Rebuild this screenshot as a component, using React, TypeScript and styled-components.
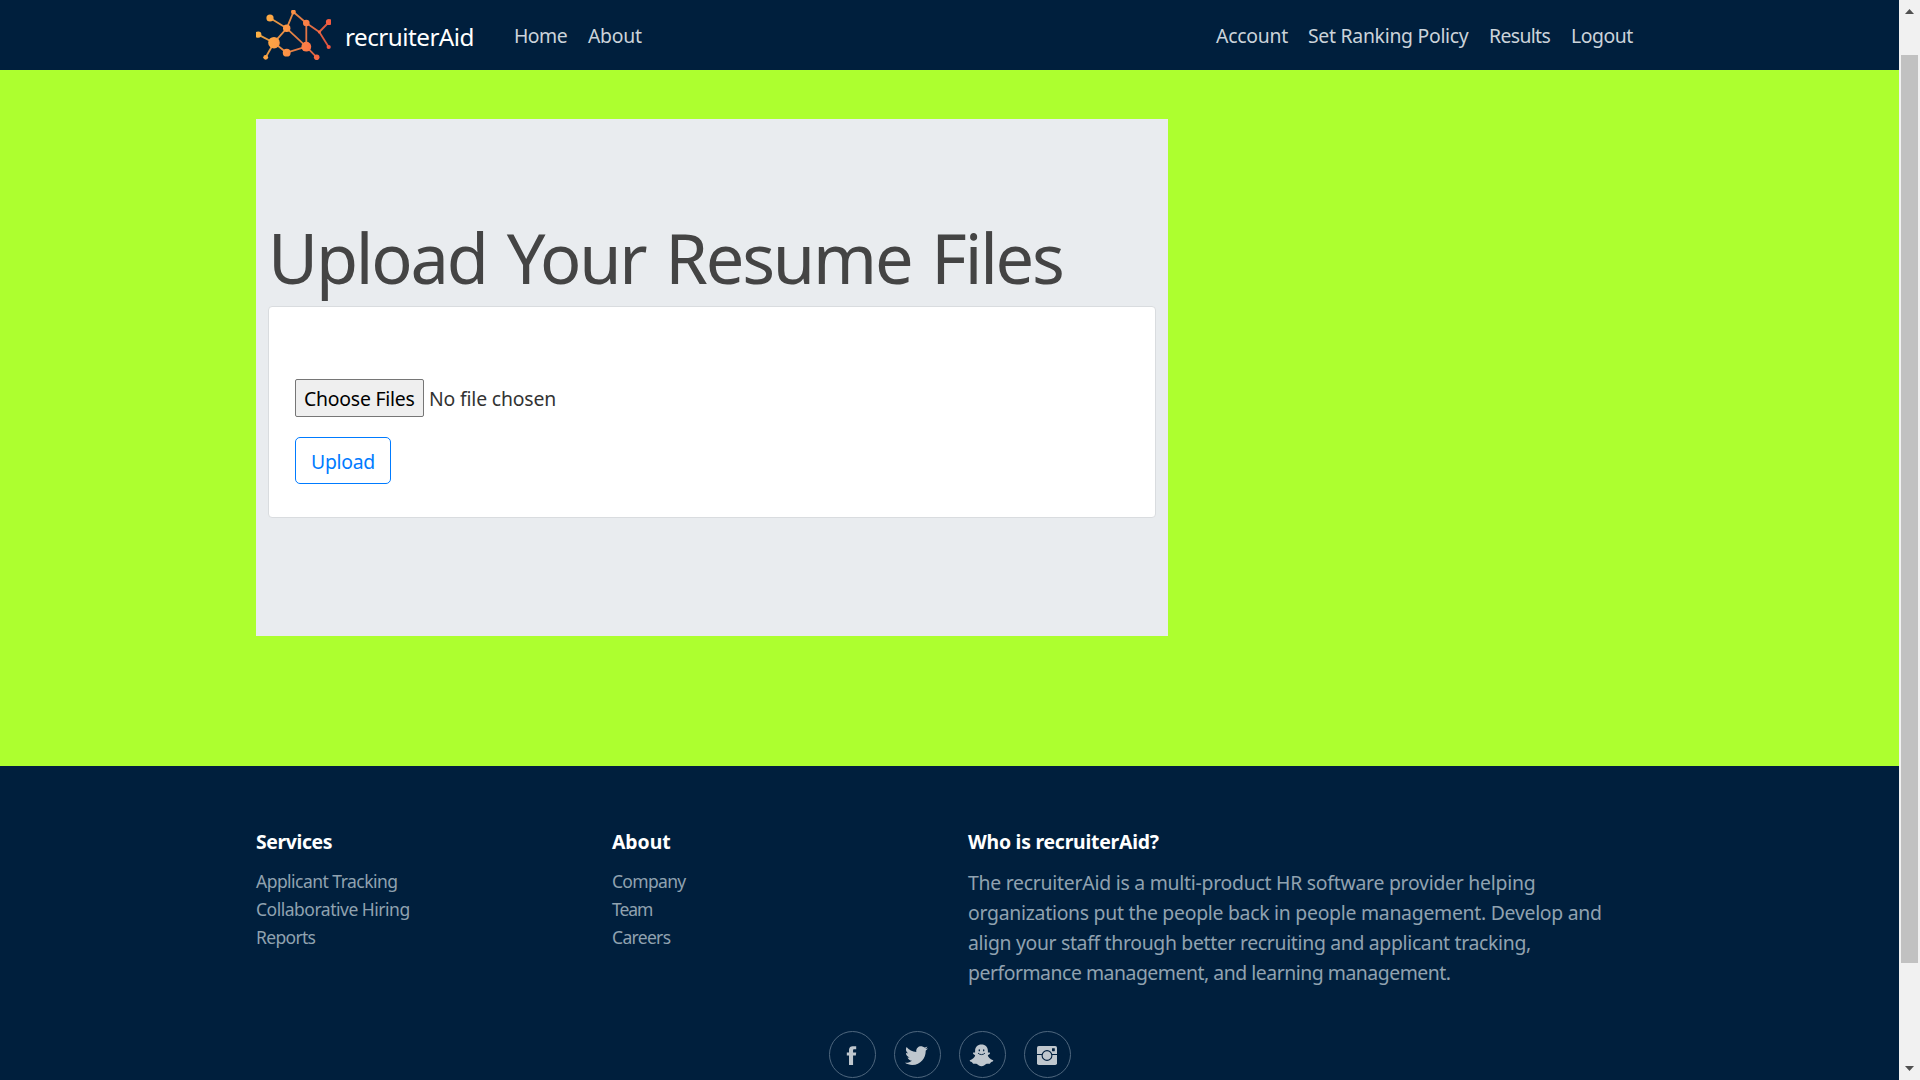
import React from "react";
import styled, { createGlobalStyle } from "styled-components";

const NAVY = "#001f3d";

const GlobalStyle = createGlobalStyle`
  *, *::before, *::after { box-sizing: border-box; }
  body {
    margin: 0;
    overflow: hidden;
    font-family: "Noto Sans", "Open Sans", sans-serif;
    font-size: 19.4px;
    line-height: 30px;
    color: #212529;
  }
  h1, h3, p, ul { margin: 0; padding: 0; font-weight: 400; }
  ul { list-style: none; }
  a { color: inherit; text-decoration: none; }
`;

const Window = styled.div`
  display: flex;
  width: 1920px;
  height: 1080px;
  overflow: hidden;
`;

const Page = styled.div`
  flex: 0 0 1899px;
  display: flex;
  flex-direction: column;
  height: 1080px;
  overflow: hidden;
  background: #adff2f;
`;

const Spaced = styled.span<{ $ls: number }>`
  letter-spacing: ${(p) => p.$ls}px;
  white-space: nowrap;
`;

const Header = styled.header`
  flex: 0 0 70px;
  display: flex;
  align-items: center;
  padding: 0 256px;
  background: ${NAVY};
`;

const Brand = styled.a`
  display: flex;
  align-items: center;
  flex: 0 0 248px;
  gap: 14px;
  color: #fff;
  font-size: 24.25px;
`;

const BrandName = styled(Spaced)`
  padding-top: 3px;
`;

const NavList = styled.nav<{ $end?: boolean }>`
  display: flex;
  margin-left: ${(p) => (p.$end ? "auto" : "0")};
`;

const NavLink = styled.a<{ $w: number }>`
  width: ${(p) => p.$w}px;
  padding: 1px 0 0 10px;
  color: #cbd3da;
`;

const Main = styled.main`
  flex: 0 0 696px;
  padding: 49px 256px 0;
`;

const Jumbotron = styled.section`
  width: 912px;
  height: 517px;
  padding: 97px 12px 0;
  background: #e9ecef;
`;

const Title = styled.h1`
  height: 90px;
  font-size: 68.5px;
  line-height: 84px;
  word-spacing: 4.3px;
  color: #444;
`;

const Card = styled.div`
  width: 888px;
  height: 212px;
  padding: 72px 26px 0;
  border: 1px solid #d9dcdf;
  border-radius: 4px;
  background: #fff;
`;

const FileRow = styled.div`
  display: flex;
  align-items: center;
  gap: 5px;
  height: 38px;
  margin-bottom: 20px;
`;

const FileButton = styled.button`
  width: 129px;
  height: 38px;
  padding: 1px 0 0 8px;
  border: 1px solid #767676;
  border-radius: 2px;
  background: #efefef;
  color: #000;
  font: inherit;
  text-align: left;
`;

const FileName = styled(Spaced)`
  padding-top: 1px;
  color: #333;
`;

const UploadButton = styled.button`
  width: 96px;
  height: 47px;
  padding: 2px 0 0 15px;
  border: 1px solid #007bff;
  border-radius: 5px;
  background: #fff;
  color: #007bff;
  font: inherit;
  text-align: left;
`;

const Footer = styled.footer`
  flex: 1 0 314px;
  padding: 62px 0 0 256px;
  background: ${NAVY};
  color: #fff;
`;

const Columns = styled.div`
  display: grid;
  grid-template-columns: 356px 356px 675px;
  height: 203px;
`;

const Heading = styled.h3`
  height: 39px;
  padding-top: 1px;
  font-size: 19.4px;
  line-height: 25px;
  font-weight: 700;
`;

const LinkItem = styled.li`
  height: 28px;
  font-size: 17.5px;
  line-height: 28px;
  color: #90a2b0;
`;

const AboutText = styled.p`
  padding-top: 1px;
`;

const AboutLine = styled(Spaced)`
  display: block;
  color: #90a2b0;
`;

const Social = styled.div`
  display: flex;
  gap: 18px;
  padding-left: 573px;
`;

const SocialLink = styled.a`
  display: flex;
  align-items: center;
  justify-content: center;
  width: 47px;
  height: 47px;
  padding: 1px 2px 0 0;
  border: 1px solid #4f677e;
  border-radius: 50%;
  color: #bfc7ce;
`;

const Scrollbar = styled.div`
  flex: 0 0 21px;
  display: flex;
  flex-direction: column;
  align-items: center;
  justify-content: space-between;
  height: 1080px;
  padding: 9px 2px 9px 1px;
  background: #f1f1f1;
`;

const Thumb = styled.div`
  width: 17px;
  height: 908px;
  margin-bottom: 62px;
  background: #c1c1c1;
`;

const nodes: [number, number, number][] = [
  [14, 8, 3.6], [2.2, 24.6, 3.2], [18, 32.7, 5.8], [9.7, 47.3, 2.4], [30.7, 18.3, 3.7],
  [37.4, 2, 2.4], [50.3, 13, 3.3], [50.3, 36.7, 4.9], [30.7, 42.7, 3.9], [60.7, 47.3, 2.8],
  [63.3, 22, 1.5], [73, 12, 3.1], [72.7, 37, 2.1],
];
const edges: [number, number][] = [
  [0, 4], [1, 2], [2, 3], [2, 4], [2, 8], [4, 5], [4, 7], [5, 6], [6, 7], [6, 10], [10, 11], [10, 12], [8, 7], [7, 9],
];

const Logo = () => (
  <svg width="75" height="50" viewBox="0 0 75 50">
    <defs>
      <linearGradient id="ember" gradientUnits="userSpaceOnUse" x1="0" y1="20" x2="75" y2="32">
        <stop offset="0" stopColor="#fdb345" />
        <stop offset="0.4" stopColor="#fc9645" />
        <stop offset="0.7" stopColor="#fb7a46" />
        <stop offset="1" stopColor="#f4543f" />
      </linearGradient>
    </defs>
    <g stroke="url(#ember)" strokeWidth="1.8" opacity="0.9">
      {edges.map(([a, b]) => (
        <line key={`${a}-${b}`} x1={nodes[a][0]} y1={nodes[a][1]} x2={nodes[b][0] + 0.01} y2={nodes[b][1]} />
      ))}
    </g>
    <g fill="url(#ember)">
      {nodes.map(([x, y, r]) => (
        <circle key={`${x}-${y}`} cx={x} cy={y} r={r} />
      ))}
    </g>
  </svg>
);

const Facebook = () => (
  <svg width="25" height="25" viewBox="0 0 512 512" fill="currentColor">
    <path d="M288 192v-38.1c0-17.2 3.8-25.9 30.5-25.9H352V64h-55.9c-68.5 0-91.1 31.4-91.1 85.3V192h-45v64h45v192h83V256h56.4l7.6-64H288z" />
  </svg>
);

const Twitter = () => (
  <svg width="25" height="25" viewBox="0 0 512 512" fill="currentColor">
    <path d="M492 109.5c-17.4 7.7-36 12.9-55.6 15.3 20-12 35.4-31 42.6-53.6-18.7 11.1-39.4 19.2-61.5 23.5C399.8 75.8 374.6 64 346.8 64c-53.5 0-96.8 43.4-96.8 96.9 0 7.6.8 15 2.5 22.1-80.5-4-151.9-42.6-199.6-101.3-8.3 14.3-13.1 31-13.1 48.7 0 33.6 17.2 63.3 43.2 80.7-16-.4-31-4.8-44-12.1v1.2c0 47 33.4 86.1 77.7 95-8.1 2.2-16.7 3.4-25.5 3.4-6.2 0-12.3-.6-18.2-1.8 12.3 38.5 48.1 66.5 90.5 67.3-33.1 26-74.9 41.5-120.3 41.5-7.8 0-15.5-.5-23.1-1.4C62.8 432 113.7 448 168.3 448 346.6 448 444 300.3 444 172.2c0-4.2-.1-8.4-.3-12.5C462.6 146 479 129 492 109.5z" />
  </svg>
);

const Snapchat = () => (
  <svg width="25" height="25" viewBox="0 0 25 25" fill="none">
    <path
      fill="currentColor"
      d="M12.5 1.4c3.9 0 6.4 2.6 6.4 6.3v1.9c.9-.2 1.9-.3 2.1.4.2.9-1.2 1.6-2.2 2.2.4 2.1 2.2 3.7 5.2 5 .6.4.3 1.1-1.2 1.6-1.3.4-1.3 1.6-2 1.9-1.1.3-2.6-.2-3.7.3-1.5.7-2.5 2.3-4.6 2.3s-3.100-1.600-4.600-2.300c-1.100-.5-2.600 0-3.700-.3-.7-.3-.7-1.500-2-1.900C.7 18.300.4 17.600 1 17.200c3-1.300 4.800-2.900 5.200-5C5.200 11.600 3.800 10.900 4 10c.2-.7 1.200-.6 2.100-.4V7.700c0-3.700 2.500-6.300 6.400-6.300z"
    />
    <ellipse cx="10.3" cy="7.3" rx="0.7" ry="1.1" fill={NAVY} />
    <ellipse cx="14.7" cy="7.3" rx="0.7" ry="1.1" fill={NAVY} />
    <path d="M9.3 10.4c1.6 1.7 4.8 1.7 6.4 0" stroke={NAVY} strokeWidth="0.9" strokeLinecap="round" />
  </svg>
);

const Instagram = () => (
  <svg width="20" height="19" viewBox="0 0 20 19" fill="none">
    <rect width="20" height="19" rx="1.8" fill="currentColor" />
    <path d="M0 8.5h20" stroke={NAVY} strokeWidth="1" />
    <circle cx="10" cy="9.5" r="4.9" fill="currentColor" stroke={NAVY} strokeWidth="1.1" />
    <rect x="15" y="2.2" width="2.8" height="3" rx="0.4" fill={NAVY} />
  </svg>
);

type Label = [string, number];
type Link = [string, number, number];

const leftLinks: Link[] = [["Home", 74, -0.53], ["About", 75, -0.28]];
const rightLinks: Link[] = [
  ["Account", 92, -0.25], ["Set Ranking Policy", 181, -0.28], ["Results", 82, -0.63], ["Logout", 82, -0.46],
];
const services: Label[] = [["Applicant Tracking", -0.53], ["Collaborative Hiring", -0.49], ["Reports", -0.68]];
const company: Label[] = [["Company", -0.69], ["Team", -1.1], ["Careers", -0.68]];
const aboutText: Label[] = [
  ["The recruiterAid is a multi-product HR software provider helping", -0.25],
  ["organizations put the people back in people management. Develop and", -0.27],
  ["align your staff through better recruiting and applicant tracking,", -0.32],
  ["performance management, and learning management.", -0.47],
];

const Links = ({ items }: { items: Link[] }) => (
  <>
    {items.map(([text, w, ls]) => (
      <NavLink key={text} href="#" $w={w}><Spaced $ls={ls}>{text}</Spaced></NavLink>
    ))}
  </>
);

const FooterList = ({ title, items }: { title: Label; items: Label[] }) => (
  <div>
    <Heading><Spaced $ls={title[1]}>{title[0]}</Spaced></Heading>
    <ul>
      {items.map(([text, ls]) => (
        <LinkItem key={text}><a href="#"><Spaced $ls={ls}>{text}</Spaced></a></LinkItem>
      ))}
    </ul>
  </div>
);

export default function App() {
  return (
    <Window>
      <GlobalStyle />
      <Page>
        <Header>
          <Brand href="#">
            <Logo />
            <BrandName $ls={-0.52}>recruiterAid</BrandName>
          </Brand>
          <NavList><Links items={leftLinks} /></NavList>
          <NavList $end><Links items={rightLinks} /></NavList>
        </Header>
        <Main>
          <Jumbotron>
            <Title><Spaced $ls={-2.18}>Upload Your Resume Files</Spaced></Title>
            <Card>
              <FileRow>
                <FileButton><Spaced $ls={-0.22}>Choose Files</Spaced></FileButton>
                <FileName $ls={-0.17}>No file chosen</FileName>
              </FileRow>
              <UploadButton><Spaced $ls={-0.28}>Upload</Spaced></UploadButton>
            </Card>
          </Jumbotron>
        </Main>
        <Footer>
          <Columns>
            <FooterList title={["Services", -0.38]} items={services} />
            <FooterList title={["About", -0.05]} items={company} />
            <div>
              <Heading><Spaced $ls={-0.23}>Who is recruiterAid?</Spaced></Heading>
              <AboutText>
                {aboutText.map(([text, ls]) => <AboutLine key={text} $ls={ls}>{text}</AboutLine>)}
              </AboutText>
            </div>
          </Columns>
          <Social>
            <SocialLink href="#"><Facebook /></SocialLink>
            <SocialLink href="#"><Twitter /></SocialLink>
            <SocialLink href="#"><Snapchat /></SocialLink>
            <SocialLink href="#"><Instagram /></SocialLink>
          </Social>
        </Footer>
      </Page>
      <Scrollbar>
        <svg width="9" height="5" viewBox="0 0 9 5" fill="#505050"><path d="M4.5 0L9 5H0z" /></svg>
        <Thumb />
        <svg width="9" height="5" viewBox="0 0 9 5" fill="#505050"><path d="M0 0h9L4.5 5z" /></svg>
      </Scrollbar>
    </Window>
  );
}
